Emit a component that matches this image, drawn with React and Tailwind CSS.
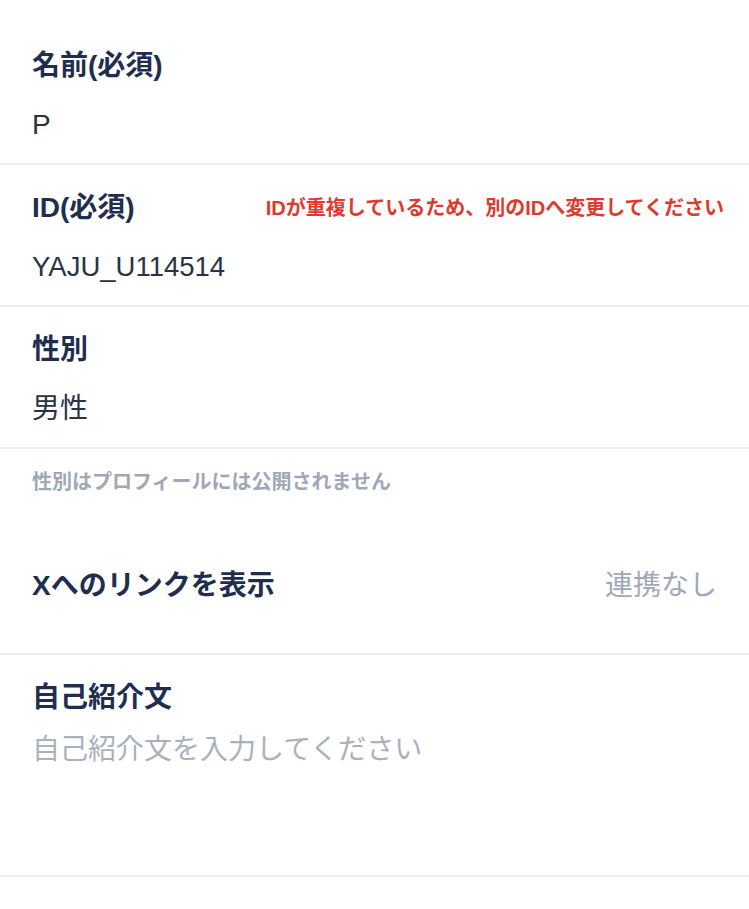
import React from 'react';

const font = "font-['Liberation_Sans','Noto_Sans_CJK_JP',sans-serif]";

const Field = ({ label, value, error, valueClass = 'text-[28px]' }) => (
  <div className="px-8 pt-[23px] pb-[18px] border-b-2 border-[#efefef]">
    <div className="flex items-center justify-between h-10">
      <span className="text-[28px] leading-10 font-bold text-[#1f2e50]">{label}</span>
      {error && (
        <span className="text-[20px] leading-10 font-bold text-[#e0392d] -mr-[7px]">{error}</span>
      )}
    </div>
    <div className={`mt-[19px] leading-10 text-[#2a3346] ${valueClass}`}>{value}</div>
  </div>
);

export default function App() {
  return (
    <div className={`min-h-screen bg-white pt-[23px] ${font}`}>
      <Field label="名前(必須)" value="P" />
      <Field
        label="ID(必須)"
        value="YAJU_U114514"
        valueClass="text-[27.5px]"
        error="IDが重複しているため、別のIDへ変更してください"
      />
      <Field label="性別" value="男性" />

      {/* note */}
      <div className="h-[66px] px-8 flex items-center">
        <span className="text-[20px] font-bold text-[#9ea8b7]">性別はプロフィールには公開されません</span>
      </div>

      {/* X link */}
      <div className="h-[140px] px-8 pt-1 flex items-center justify-between border-b-2 border-[#efefef]">
        <span className="text-[28px] font-bold text-[#1f2e50]">Xへのリンクを表示</span>
        <span className="text-[28px] text-[#9ea8b7]">連携なし</span>
      </div>

      {/* bio */}
      <div className="px-8 pt-[23px] border-b-2 border-[#efefef] h-[222px]">
        <div className="text-[28px] leading-10 font-bold text-[#1f2e50]">自己紹介文</div>
        <div className="mt-[12px] text-[28px] leading-10 text-[#a8b1be]">自己紹介文を入力してください</div>
      </div>
    </div>
  );
}
